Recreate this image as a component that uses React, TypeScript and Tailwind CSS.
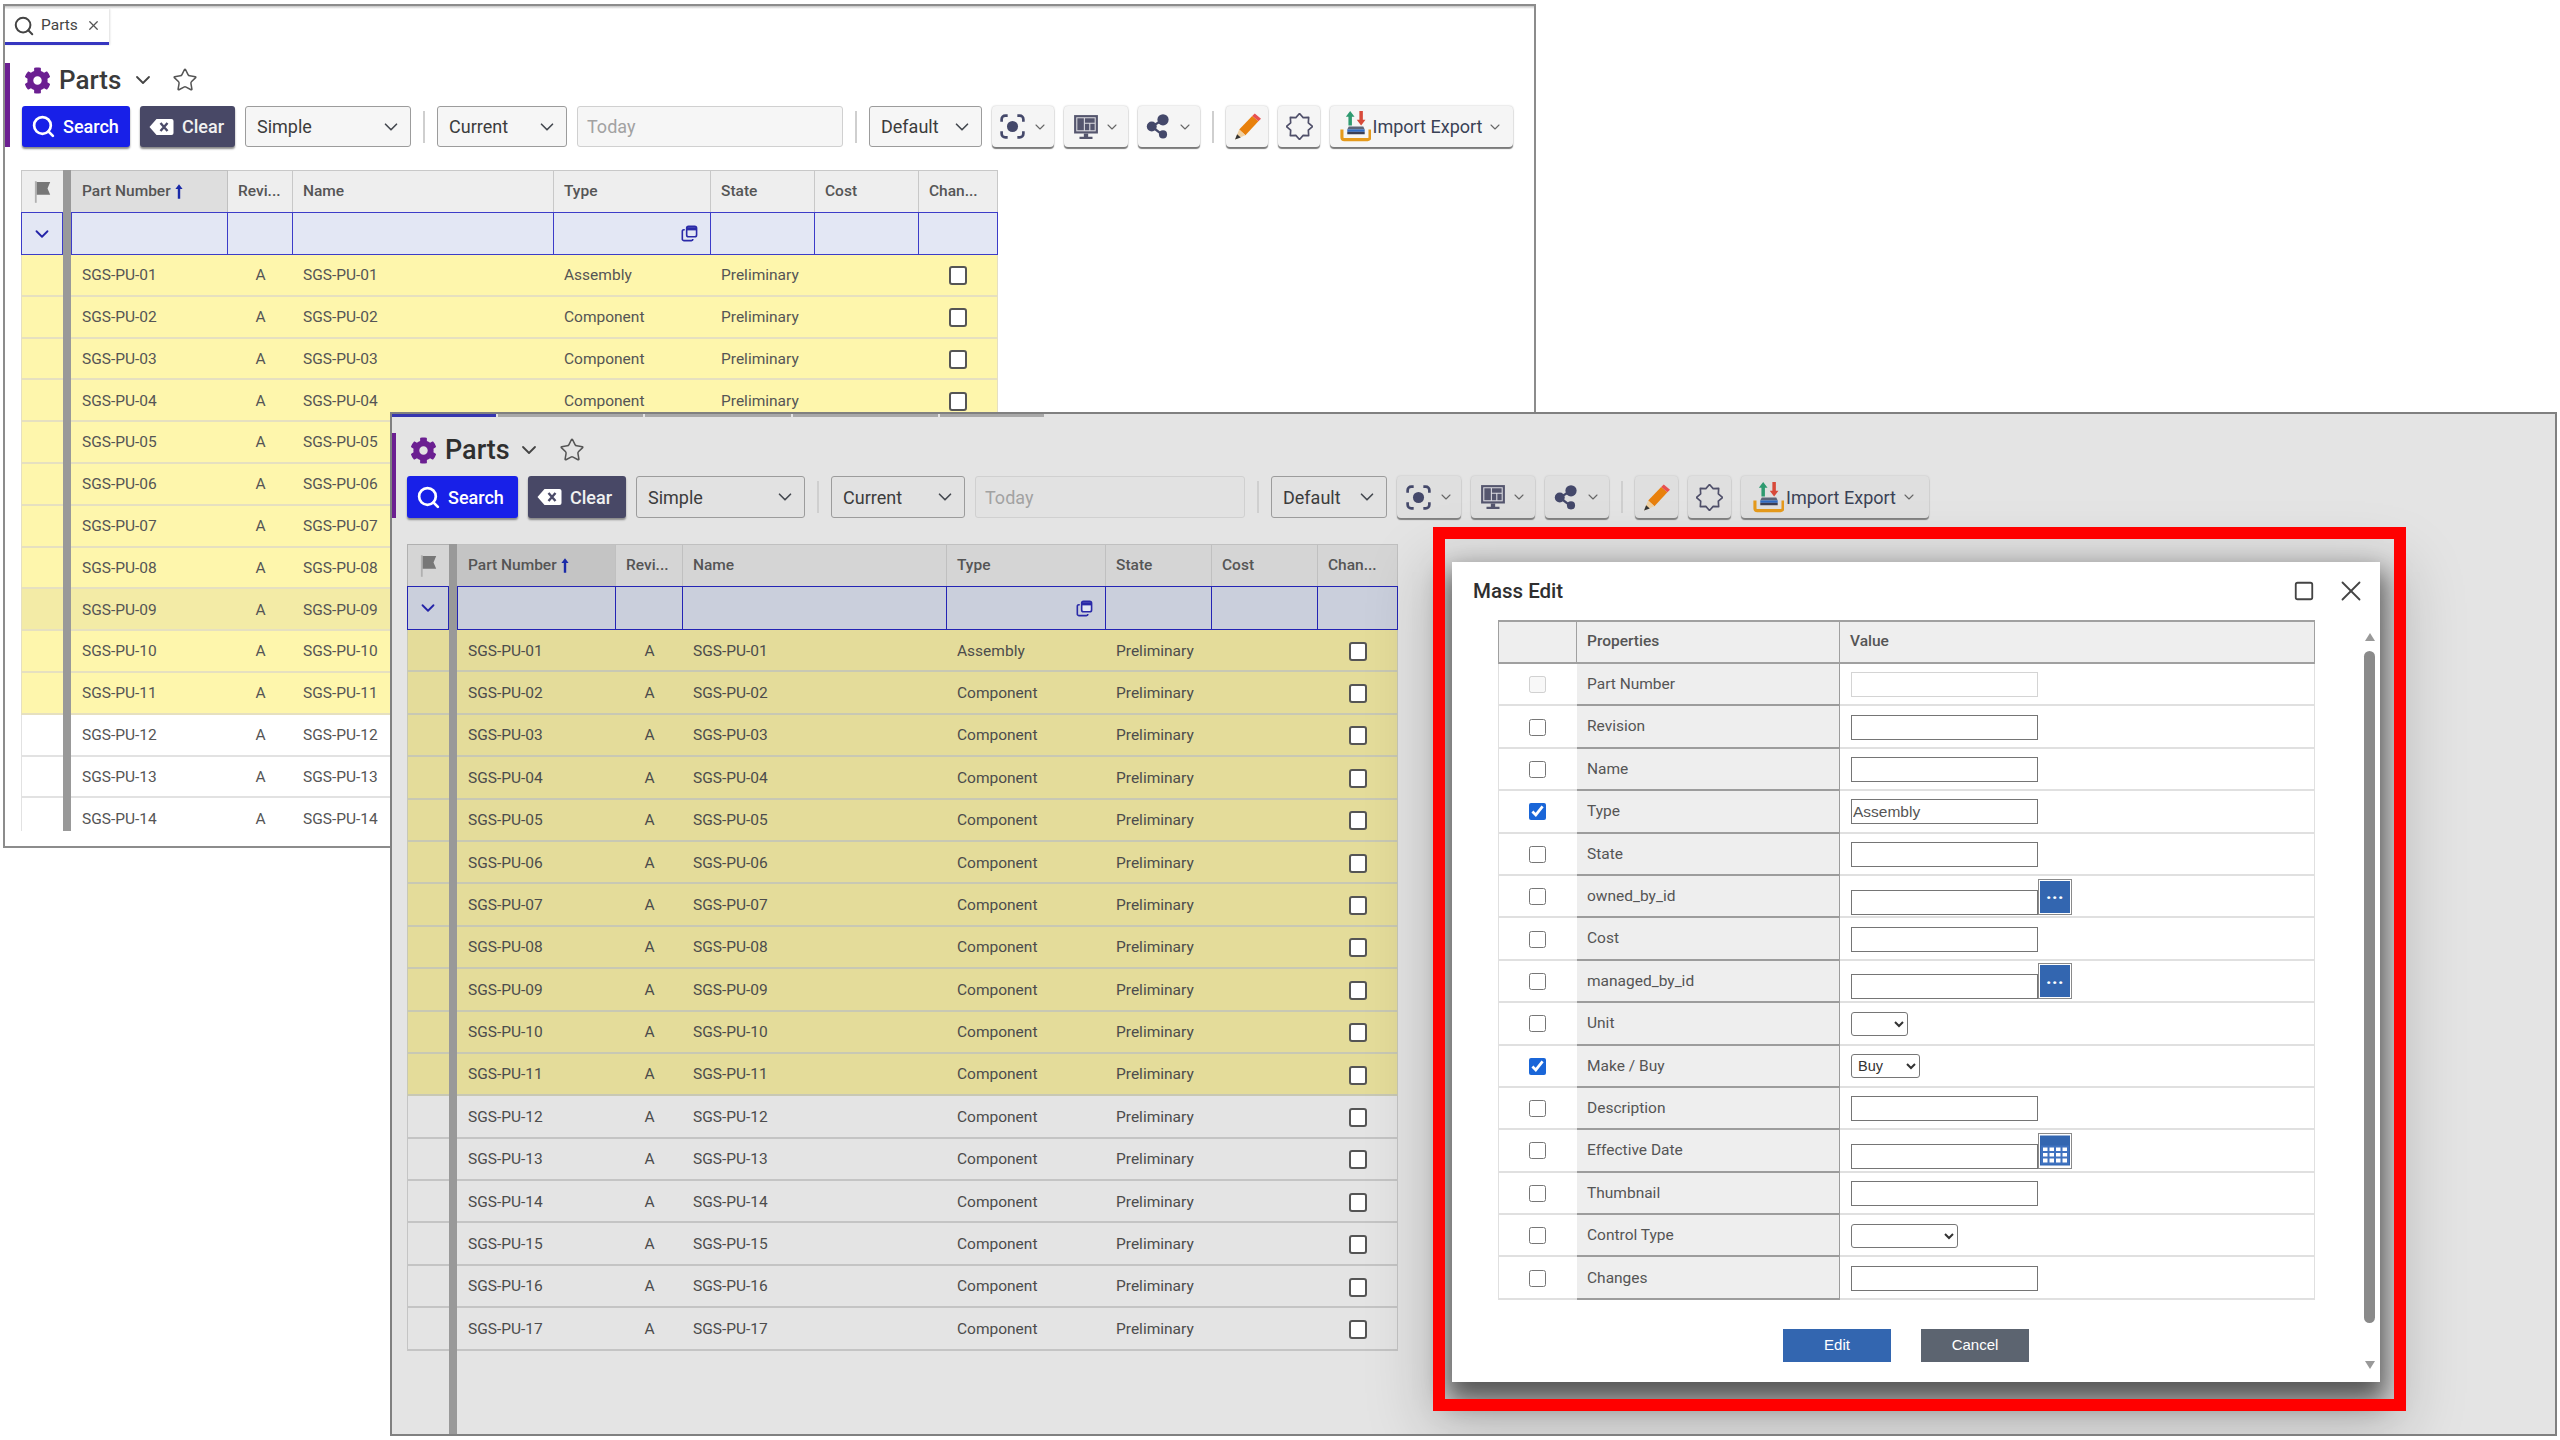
import { ChevronDown, Search, Square, Star, X } from "lucide-react";
import { FaCog } from "react-icons/fa";

const backTheme = {
  win: "left-[3px] top-[4px] w-[1533px] h-[844px] bg-white",
  bar: "w-[5px] h-[84px] bg-[#6b1f91]",
  head: "pl-[12px]",
  title: "h-[43px] pl-[2px] pb-[9px] text-[26px]",
  parts: "ml-[8px] text-[#3a3a3a]",
  chevron: "ml-[10px]",
  star: "ml-[17px]",
  widths: {
    search: "w-[108px]",
    clear: "w-[95px]",
    simple: "w-[166px]",
    current: "w-[130px]",
    today: "w-[266px]",
    def: "w-[113px]",
    capture: "w-[62px]",
    layout: "w-[64px]",
    share: "w-[62px]",
    tool: "w-[42px]",
    io: "w-[183px]",
  },
  fill: "bg-[#f6f6f6]",
  tbtn: "bg-[#f5f5f5] shadow-[0_2px_1px_#7a7a7a,0_0_2px_#bbb]",
  tool: "h-[41px]",
  table: "mt-[23px] ml-[16px] w-[977px] h-[661px]",
  cols: ["w-[42px]", "w-[157px]", "w-[65px]", "w-[261px]", "w-[157px]", "w-[104px]", "w-[104px]", "w-[79px]"],
  th: "bg-[#eeeeee] border-[#c8c8c8]",
  thSort: "bg-[#dedede]",
  filter: "bg-[#e3e7f4] border-[#3c3cc8]",
  hrow: "h-[42px]",
  frow: "h-[43px]",
  row: "h-[41.8px]",
  line: "border-[#e6e0c0]",
  whiteLine: "border-[#e2e2e2]",
  plain: "bg-white",
  yellow: "bg-[#fef6ac]",
  darker: "bg-[#f3eba6]",
  text: "text-[15.5px] text-[#555555]",
  count: 14,
  marked: 9,
};

const frontTheme = {
  win: "left-[390px] top-[412px] w-[2167px] h-[1024px] bg-[#e4e4e4]",
  bar: "w-[4px] h-[85px] bg-[#6b1f91]",
  head: "pl-[11px]",
  title: "h-[43px] pl-[3px] pb-[9px] text-[27px]",
  parts: "ml-[8px] text-[#2f2f2f]",
  chevron: "ml-[7px]",
  star: "ml-[18px]",
  widths: {
    search: "w-[111px]",
    clear: "w-[98px]",
    simple: "w-[169px]",
    current: "w-[134px]",
    today: "w-[270px]",
    def: "w-[116px]",
    capture: "w-[64px]",
    layout: "w-[64px]",
    share: "w-[64px]",
    tool: "w-[43px]",
    io: "w-[188px]",
  },
  fill: "bg-[#e2e2e2]",
  tbtn: "bg-[#dfdfdf] shadow-[0_2px_1px_#808080,0_0_2px_#bbb]",
  tool: "h-[42px]",
  table: "mt-[26px] ml-[15px] w-[991px] flex-1",
  cols: ["w-[42px]", "w-[159px]", "w-[67px]", "w-[264px]", "w-[159px]", "w-[106px]", "w-[106px]", "w-[80px]"],
  th: "bg-[#d5d5d5] border-[#b0b0b0]",
  thSort: "bg-[#c4c4c4]",
  filter: "bg-[#cacfdc] border-[#2424b4]",
  hrow: "h-[42px]",
  frow: "h-[44px]",
  row: "h-[42.4px]",
  line: "border-[#c8c8b4]",
  whiteLine: "border-[#c4c4c4]",
  plain: "bg-[#e4e4e4]",
  yellow: "bg-[#e4dc9a]",
  darker: "bg-[#e4dc9a]",
  text: "text-[15.5px] text-[#4c4c4c]",
  count: 17,
  marked: -1,
};

type Theme = typeof backTheme;

function ClearIcon() {
  return (
    <svg viewBox="0 0 26 18" className="w-[27px] h-[18px]">
      <path d="M8 1h15a2 2 0 0 1 2 2v12a2 2 0 0 1-2 2H8L1 9z" fill="#fff" />
      <path d="M12 5l7 8M19 5l-7 8" stroke="#4a4a68" strokeWidth="2.4" />
    </svg>
  );
}

function CaptureIcon() {
  return (
    <svg viewBox="0 0 24 24" className="w-[29px] h-[29px]" fill="none" stroke="#44486a" strokeWidth="2.2">
      <path d="M8 3H6a3 3 0 0 0-3 3v2M16 3h2a3 3 0 0 1 3 3v2M8 21H6a3 3 0 0 1-3-3v-2M16 21h2a3 3 0 0 0 3-3v-2" />
      <circle cx="12" cy="12" r="4.6" fill="#44486a" stroke="none" />
    </svg>
  );
}

function LayoutIcon() {
  return (
    <svg viewBox="0 0 24 24" className="w-[26px] h-[26px]" fill="#55566e">
      <path d="M1 1h22v17H1z" />
      <path d="M3 3h18v13H3z" fill="#dcdce2" />
      <path d="M4 4h6v11H4zM11 4h9v4h-9zM11 9h4v6h-4zM16 9h4v6h-4z" />
      <path d="M10 18h4v3h4v2H6v-2h4z" />
    </svg>
  );
}

function ShareIcon() {
  return (
    <svg viewBox="0 0 24 24" className="w-[27px] h-[27px]" fill="#44486a">
      <path d="M16 6L6 12l9 7" fill="none" stroke="#44486a" strokeWidth="2" />
      <circle cx="16" cy="6" r="5" />
      <circle cx="6" cy="12" r="4.4" />
      <circle cx="16" cy="19" r="3.6" />
    </svg>
  );
}

function PencilIcon() {
  return (
    <svg viewBox="0 0 26 26" className="w-[27px] h-[27px]">
      <path d="M5 16L17.500 3l6 5L11 21.500z" fill="#e8800c" />
      <path d="M17.500 3L20 .5l6 5L23.500 8z" fill="#e85050" />
      <path d="M5 16l6 5.500L1 25.500z" fill="#f0d0a0" />
      <path d="M3 20.500l3.500 3L1 25.500z" fill="#333" />
    </svg>
  );
}

// eight soft bumps round a ring, like the toolbar's "burst" outline
function BurstIcon() {
  const points = Array.from({ length: 16 }, (_, i) => {
    const angle = (i * Math.PI) / 8 - Math.PI / 2;
    const radius = i % 2 === 0 ? 12.5 : 9.2;
    return `${(13 + radius * Math.cos(angle)).toFixed(2)},${(13 + radius * Math.sin(angle)).toFixed(2)}`;
  }).join(" ");
  return (
    <svg viewBox="0 0 26 26" className="w-[27px] h-[27px]" fill="none" stroke="#50506a" strokeWidth="1.6" strokeLinejoin="round">
      <polygon points={points} />
    </svg>
  );
}

function ImportExportIcon() {
  return (
    <svg viewBox="0 0 32 32" className="w-[31px] h-[31px]">
      <path d="M10.500 0l4.500 6h-2.700v9h-3.600V6H6z" fill="#2e9a70" />
      <path d="M20 0h3.600v9h2.700l-4.500 6-4.500-6H20z" fill="#d84a3a" />
      <path d="M9 16h15l1.500 3h-18z" fill="#5c6478" />
      <path d="M7.500 19h18v2.500h-18z" fill="#2f6bc4" />
      <path d="M7.500 21.500h18v2.500h-18z" fill="#3b3f55" />
      <path d="M2 19v8a2.500 2.500 0 0 0 2.500 2.500h24A2.500 2.500 0 0 0 31 27v-8" fill="none" stroke="#e59a1c" strokeWidth="3.2" />
    </svg>
  );
}

function FlagIcon() {
  return (
    <svg viewBox="0 0 20 26" className="w-[18px] h-[24px]">
      <path d="M1 1h2v24H1z" fill="#b0b0b0" />
      <path d="M3 2h15l-3 7 3 7H3z" fill="#777777" />
    </svg>
  );
}

function CopyIcon() {
  return (
    <svg viewBox="0 0 18 18" className="w-[17px] h-[17px]" fill="none" stroke="#2a2aa8" strokeWidth="1.7">
      <rect x="6" y="1.5" width="10.5" height="11" rx="2" fill="#e3e7f4" />
      <path d="M6 4h10.5" strokeWidth="3.4" />
      <path d="M4 5H3a1.6 1.6 0 0 0-1.6 1.6v8A1.6 1.6 0 0 0 3 16.500h8a1.600 1.600 0 0 0 1.600-1.600V15" />
    </svg>
  );
}

function SortArrow() {
  return (
    <svg viewBox="0 0 10 18" className="ml-[4px] w-[8px] h-[15px]" fill="#1a2aa8">
      <path d="M5 0l4.500 6H6.500v12h-3V6H.500z" />
    </svg>
  );
}

function Divider() {
  return <div className="w-[2px] h-[32px] mx-[2px] self-center bg-[#cfcfcf]" />;
}

function SelectBox({ label, width, theme }: { label: string; width: string; theme: Theme }) {
  return (
    <div className={`${width} ${theme.fill} flex items-center justify-between rounded-[3px] border-[1.5px] border-[#9c9c9c] pl-[11px] pr-[8px] text-[18px] text-[#3c3c3c]`}>
      <span>{label}</span>
      <ChevronDown className="w-[22px] h-[22px] text-[#44484f]" strokeWidth={1.8} />
    </div>
  );
}

function ToolButton({ width, theme, chevron, children }: { width: string; theme: Theme; chevron?: boolean; children: React.ReactNode }) {
  return (
    <div className={`${width} ${theme.tbtn} flex items-center justify-center gap-[5px] rounded-[4px]`}>
      {children}
      {chevron && <ChevronDown className="w-[16px] h-[16px] text-[#666]" strokeWidth={1.6} />}
    </div>
  );
}

function Toolbar({ theme }: { theme: Theme }) {
  const w = theme.widths;
  return (
    <div className={`${theme.tool} flex gap-[10px]`}>
      <div className={`${w.search} flex items-center gap-[7px] rounded-[3px] bg-[#1820e8] pl-[9px] text-[18px] font-medium text-white shadow-[0_2px_2px_#888]`}>
        <Search className="w-[25px] h-[25px]" strokeWidth={2.6} />
        Search
      </div>
      <div className={`${w.clear} flex items-center gap-[7px] rounded-[3px] bg-[#484866] pl-[8px] text-[18px] font-medium text-[#f0f0f0] shadow-[0_2px_2px_#888]`}>
        <ClearIcon />
        Clear
      </div>
      <SelectBox label="Simple" width={w.simple} theme={theme} />
      <Divider />
      <SelectBox label="Current" width={w.current} theme={theme} />
      <div className={`${w.today} ${theme.fill} flex items-center rounded-[3px] border-[1.5px] border-[#d0d0d0] pl-[9px] text-[18px] text-[#a2a2a2]`}>
        Today
      </div>
      <Divider />
      <SelectBox label="Default" width={w.def} theme={theme} />
      <ToolButton width={w.capture} theme={theme} chevron>
        <CaptureIcon />
      </ToolButton>
      <ToolButton width={w.layout} theme={theme} chevron>
        <LayoutIcon />
      </ToolButton>
      <ToolButton width={w.share} theme={theme} chevron>
        <ShareIcon />
      </ToolButton>
      <Divider />
      <ToolButton width={w.tool} theme={theme}>
        <PencilIcon />
      </ToolButton>
      <ToolButton width={w.tool} theme={theme}>
        <BurstIcon />
      </ToolButton>
      <ToolButton width={w.io} theme={theme} chevron>
        <div className="flex items-center gap-[2px] text-[18px] text-[#3a4256]">
          <ImportExportIcon />
          Import Export
        </div>
      </ToolButton>
    </div>
  );
}

function PartsHeader({ theme }: { theme: Theme }) {
  return (
    <div className="flex">
      <div className={theme.bar} />
      <div className={`${theme.head} flex flex-col`}>
        <div className={`${theme.title} flex items-center font-medium`}>
          <FaCog className="w-[27px] h-[27px] text-[#6b1f91]" />
          <span className={theme.parts}>Parts</span>
          <ChevronDown className={`${theme.chevron} w-[24px] h-[24px] text-[#444]`} strokeWidth={1.8} />
          <Star className={`${theme.star} w-[26px] h-[26px] text-[#555]`} strokeWidth={1.4} />
        </div>
        <Toolbar theme={theme} />
      </div>
    </div>
  );
}

function Checkbox() {
  return <div className="w-[18px] h-[19px] rounded-[3px] border-2 border-[#555555] bg-white" />;
}

function GridHead({ theme }: { theme: Theme }) {
  const titles = ["Part Number", "Revi...", "Name", "Type", "State", "Cost", "Chan..."];
  return (
    <div className={`${theme.hrow} flex shrink-0 text-[15.5px] font-medium text-[#555555]`}>
      <div className={`${theme.cols[0]} ${theme.th} flex items-center justify-center border-l border-t`}>
        <FlagIcon />
      </div>
      <div className="w-[8px] bg-[#999999]" />
      {titles.map((title, i) => (
        <div
          key={title}
          className={`${theme.cols[i + 1]} ${i === 0 ? theme.thSort : theme.th} flex items-center border-r border-t border-[#c0c0c0] ${i === 0 ? "pl-[11px]" : "pl-[10px]"}`}
        >
          {title}
          {i === 0 && <SortArrow />}
        </div>
      ))}
    </div>
  );
}

function FilterRow({ theme }: { theme: Theme }) {
  const cells = theme.cols.slice(1);
  return (
    <div className={`${theme.frow} flex shrink-0`}>
      <div className={`${theme.cols[0]} ${theme.filter} flex items-center justify-center border-[1.5px]`}>
        <ChevronDown className="w-[22px] h-[22px] text-[#2424a8]" strokeWidth={2} />
      </div>
      <div className="w-[8px] bg-[#999999]" />
      {cells.map((width, i) => (
        <div
          key={width + i}
          className={`${width} ${theme.filter} flex items-center justify-end border-y-[1.5px] border-r-[1.5px] ${i === 0 ? "border-l-[1.5px]" : ""} pr-[12px]`}
        >
          {i === 3 && <CopyIcon />}
        </div>
      ))}
    </div>
  );
}

function GridRow({ theme, n }: { theme: Theme; n: number }) {
  const id = `SGS-PU-${String(n).padStart(2, "0")}`;
  const highlighted = n <= 11;
  const bg = n === theme.marked ? theme.darker : highlighted ? theme.yellow : theme.plain;
  const line = highlighted ? theme.line : theme.whiteLine;
  return (
    <div className={`${theme.row} ${theme.text} flex shrink-0`}>
      <div className={`${theme.cols[0]} ${bg} ${line} border-b-2 border-l`} />
      <div className="w-[8px] bg-[#999999]" />
      <div className={`${theme.cols[1]} ${bg} ${line} flex items-center border-b-2 pl-[11px] pt-[2px]`}>{id}</div>
      <div className={`${theme.cols[2]} ${bg} ${line} flex items-center justify-center border-b-2 pt-[2px]`}>A</div>
      <div className={`${theme.cols[3]} ${bg} ${line} flex items-center border-b-2 pl-[10px] pt-[2px]`}>{id}</div>
      <div className={`${theme.cols[4]} ${bg} ${line} flex items-center border-b-2 pl-[10px] pt-[2px]`}>{n === 1 ? "Assembly" : "Component"}</div>
      <div className={`${theme.cols[5]} ${bg} ${line} flex items-center border-b-2 pl-[10px] pt-[2px]`}>Preliminary</div>
      <div className={`${theme.cols[6]} ${bg} ${line} border-b-2`} />
      <div className={`${theme.cols[7]} ${bg} ${line} flex items-center justify-center border-b-2 border-r pt-[2px]`}>
        <Checkbox />
      </div>
    </div>
  );
}

function PartsGrid({ theme }: { theme: Theme }) {
  const rows = Array.from({ length: theme.count }, (_, i) => i + 1);
  return (
    <div className={`${theme.table} flex flex-col overflow-hidden`}>
      <GridHead theme={theme} />
      <FilterRow theme={theme} />
      {rows.map((n) => (
        <GridRow key={n} theme={theme} n={n} />
      ))}
      {/* the frozen-column bar runs on under the last row */}
      <div className="flex flex-1">
        <div className={theme.cols[0]} />
        <div className="w-[8px] bg-[#999999]" />
      </div>
    </div>
  );
}

const massEditRows = [
  { label: "Part Number", disabled: true },
  { label: "Revision" },
  { label: "Name" },
  { label: "Type", checked: true, value: "Assembly" },
  { label: "State" },
  { label: "owned_by_id", action: "picker" },
  { label: "Cost" },
  { label: "managed_by_id", action: "picker" },
  { label: "Unit", select: "w-[57px]", options: [""] },
  { label: "Make / Buy", checked: true, select: "w-[69px]", options: ["Buy"] },
  { label: "Description" },
  { label: "Effective Date", action: "calendar" },
  { label: "Thumbnail" },
  { label: "Control Type", select: "w-[107px]", options: [""] },
  { label: "Changes" },
];

function CalendarGlyph() {
  return (
    <svg viewBox="0 0 30 30" className="w-[30px] h-[31px]">
      <path d="M0 0h30v30H0z" fill="#3366b0" />
      <path d="M2 11h26v17H2z" fill="#fff" />
      <path d="M2 11h26v17H2zM8.500 11v17M15 11v17M21.500 11v17M2 16.500h26M2 22h26" fill="none" stroke="#3f72c0" strokeWidth="2" />
    </svg>
  );
}

function ValueCell({ row }: { row: (typeof massEditRows)[number] }) {
  if (row.select) {
    return (
      <select
        defaultValue={row.options?.[0]}
        className={`${row.select} h-[24px] rounded-[3px] border border-[#767676] bg-white pl-[2px] text-[14.5px] text-[#333] [font-family:'Liberation_Sans',sans-serif]`}
      >
        {row.options?.map((option) => (
          <option key={option}>{option}</option>
        ))}
      </select>
    );
  }
  const input = (
    <input
      readOnly
      value={row.value ?? ""}
      className={`h-[25px] w-[187px] border-[1.5px] ${row.disabled ? "border-[#d4d4d4]" : "border-[#757575]"} bg-white pl-[1px] text-[15.5px] text-[#555] outline-none [font-family:'Liberation_Sans',sans-serif]`}
    />
  );
  if (!row.action) return input;
  return (
    <div className="flex items-end">
      {input}
      <div className="h-[36px] w-[34px] border-[1.5px] border-[#8a8a8a] bg-white p-[1px]">
        {row.action === "picker" ? (
          <div className="flex h-full items-center justify-center bg-[#3366b0] pb-[8px] text-[19px] font-bold leading-none tracking-[0.5px] text-white">
            ...
          </div>
        ) : (
          <CalendarGlyph />
        )}
      </div>
    </div>
  );
}

function MassEditDialog() {
  return (
    <div className="absolute left-[1060px] top-[148px] flex h-[820px] w-[928px] flex-col bg-white shadow-[0_14px_24px_4px_rgba(0,0,0,0.55),0_26px_60px_24px_rgba(0,0,0,0.18)]">
      <div className="flex h-[58px] shrink-0 items-center pl-[21px] pr-[12px]">
        <span className="text-[20.5px] font-medium text-[#2f2f2f]">Mass Edit</span>
        <Square className="ml-auto w-[22px] h-[22px] text-[#444]" strokeWidth={2} />
        <X className="ml-[19px] w-[34px] h-[34px] text-[#444]" strokeWidth={1.3} />
      </div>

      <div className="ml-[46px] flex w-[817px] flex-col text-[15.5px] text-[#555555]">
        <div className="flex h-[44px] border-y-2 border-[#a0a0a0] bg-[#eeeeee] font-medium">
          <div className="w-[79px] border-l border-r border-[#a0a0a0]" />
          <div className="flex w-[263px] items-center border-r border-[#a0a0a0] pl-[10px]">Properties</div>
          <div className="flex flex-1 items-center border-r border-[#a0a0a0] pl-[10px]">Value</div>
        </div>
        {massEditRows.map((row) => (
          <div key={row.label} className="flex h-[42.4px]">
            <div className="flex w-[79px] items-center justify-center border-b-2 border-l border-[#e0e0e0] pr-[2px] pt-[1px]">
              <input
                type="checkbox"
                readOnly
                checked={!!row.checked}
                disabled={!!row.disabled}
                className="h-[17px] w-[17px] accent-[#1a66d8]"
              />
            </div>
            <div className="flex w-[263px] items-center border-b-2 border-r border-[#9c9c9c] bg-[#eeeeee] pl-[10px] pt-[1px]">{row.label}</div>
            <div className="flex flex-1 items-center border-b-2 border-r border-[#e0e0e0] pl-[11px] pt-[1px]">
              <ValueCell row={row} />
            </div>
          </div>
        ))}
      </div>

      <div className="mt-[29px] flex gap-[30px] pl-[331px] text-[15px] [font-family:'Liberation_Sans',sans-serif] text-white">
        <div className="flex h-[33px] w-[108px] items-center justify-center bg-[#3366b0]">Edit</div>
        <div className="flex h-[33px] w-[108px] items-center justify-center bg-[#5c6470]">Cancel</div>
      </div>

      {/* page scrollbar lying over the dialog's right edge */}
      <div className="absolute left-[913px] top-[71px] h-0 w-0 border-x-[5px] border-b-[8px] border-x-transparent border-b-[#999]" />
      <div className="absolute left-[912px] top-[89px] h-[672px] w-[11px] rounded-full bg-[#8a8a8a]" />
      <div className="absolute left-[913px] top-[799px] h-0 w-0 border-x-[5px] border-t-[8px] border-x-transparent border-t-[#999]" />
    </div>
  );
}

export default function App() {
  const tabTicks = ["w-[145px]", "w-[146px]", "w-[145px]", "w-[104px]"];
  return (
    <div className="relative h-[1440px] w-[2560px] overflow-hidden bg-white [font-family:Roboto,sans-serif]">
      {/* list window behind */}
      <div className={`${backTheme.win} absolute flex flex-col border-2 border-[#8c8c8c]`}>
        <div className="h-[3px] shrink-0 bg-gradient-to-b from-[#c4c4c4] to-white" />
        <div className="flex h-[36px] w-[104px] shrink-0 items-center border-b-[3px] border-[#3636c0] pl-[8px] text-[15.500px] text-[#444] shadow-[1px_0_2px_#ddd]">
          <Search className="w-[22px] h-[24px] text-[#444]" strokeWidth={2.2} />
          <span className="ml-[6px]">Parts</span>
          <X className="ml-[8px] w-[15px] h-[15px] text-[#555]" strokeWidth={2} />
        </div>
        <div className="h-[18px] shrink-0" />
        <PartsHeader theme={backTheme} />
        <PartsGrid theme={backTheme} />
      </div>

      {/* the same window, dimmed behind the dialog */}
      <div className={`${frontTheme.win} absolute flex flex-col overflow-hidden border-2 border-[#808080]`}>
        <div className="flex h-[3px] shrink-0 gap-[2px]">
          <div className="w-[104px] bg-[#3636b0]" />
          {tabTicks.map((width, i) => (
            <div key={i} className={`${width} bg-[#a8a8a8]`} />
          ))}
        </div>
        <div className="h-[16px] shrink-0" />
        <PartsHeader theme={frontTheme} />
        <PartsGrid theme={frontTheme} />
        <MassEditDialog />
        {/* red callout drawn round the dialog */}
        <div className="absolute left-[1041px] top-[113px] h-[884px] w-[973px] border-[12px] border-[#ff0000]" />
      </div>
    </div>
  );
}
